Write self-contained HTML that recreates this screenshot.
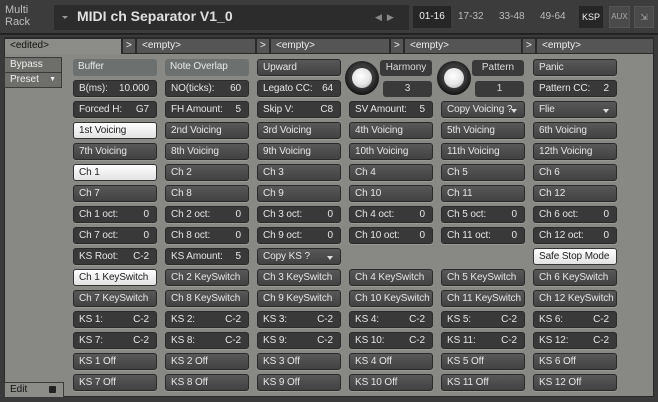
<!DOCTYPE html>
<html><head><meta charset="utf-8"><style>
*{margin:0;padding:0;box-sizing:border-box}
body{width:658px;height:402px;overflow:hidden;background:#3a3a3a;font-family:"Liberation Sans","DejaVu Sans",sans-serif;position:relative}
.a{position:absolute}
.b{position:absolute;width:84px;height:17px;border-radius:3px;font-size:10px;letter-spacing:-0.1px;line-height:16px;padding-left:5px;color:#e6e6e6;white-space:nowrap;overflow:hidden}
.btn{background:linear-gradient(#585858,#424242);border:1px solid #2a2a2a;box-shadow:0 1px 0 #9a9a95}
.val{background:#393939;border:1px solid #2a2a2a;box-shadow:0 1px 0 #9a9a95}
.val span{position:absolute;right:7px}
.lt{background:#6c716f;color:#e8e8e8}
.wh{background:linear-gradient(#ffffff,#e2e2e2);color:#222;border:1px solid #333}
.dd:after{content:"";position:absolute;right:7px;top:7px;border-left:3.5px solid transparent;border-right:3.5px solid transparent;border-top:4px solid #ddd}
.c0{left:73px}.c1{left:165px}.c2{left:257px}.c3{left:349px}.c4{left:441px}.c5{left:533px}
.r0{top:59px}.r1{top:80px}.r2{top:101px}.r3{top:122px}.r4{top:143px}.r5{top:164px}.r6{top:185px}.r7{top:206px}.r8{top:227px}.r9{top:248px}.r10{top:269px}.r11{top:290px}.r12{top:311px}.r13{top:332px}.r14{top:353px}.r15{top:374px}
.tab{position:absolute;top:38px;height:16px;background:#555;border:1px solid #2a2a2a;color:#eee;font-size:10px;line-height:14px;padding-left:5px}
.knob{position:absolute;width:34px;height:34px;border-radius:50%;background:radial-gradient(circle at 50% 45%,#3a3a3a 45%,#151515 72%,#000 100%)}
.knob i{position:absolute;left:7px;top:7px;width:20px;height:20px;border-radius:50%;background:radial-gradient(circle at 45% 40%,#fff,#e5e5e5 55%,#999)}
</style></head><body>
<div class="a" style="left:0;top:0;width:658px;height:36px;background:#3c3c3c"></div>
<div class="a" style="left:5px;top:4px;color:#bdbdbd;font-size:11px;line-height:12px">Multi<br>Rack</div>
<div class="a" style="left:54px;top:5px;width:355px;height:25px;background:#2c2c2c"></div>
<div class="a" style="left:62px;top:16px;border-left:3px solid transparent;border-right:3px solid transparent;border-top:3px solid #999"></div>
<div class="a" style="left:77px;top:8px;color:#e0e0e0;font-size:14px;font-weight:bold">MIDI ch Separator V1_0</div>
<div class="a" style="left:375px;top:12px;color:#888;font-size:9px">◀ &nbsp;▶</div>
<div class="a" style="left:413px;top:6px;width:38px;height:22px;background:#262626;color:#eee;font-size:10px;line-height:22px;text-align:center">01-16</div>
<div class="a" style="left:458px;top:11px;color:#bbb;font-size:10px">17-32</div>
<div class="a" style="left:499px;top:11px;color:#bbb;font-size:10px">33-48</div>
<div class="a" style="left:540px;top:11px;color:#bbb;font-size:10px">49-64</div>
<div class="a" style="left:579px;top:6px;width:24px;height:22px;background:#262626;color:#eee;font-size:9px;line-height:22px;text-align:center">KSP</div>
<div class="a" style="left:609px;top:6px;width:21px;height:22px;background:#4a4a4a;border:1px solid #555;color:#aaa;font-size:8px;line-height:20px;text-align:center">AUX</div>
<div class="a" style="left:634px;top:6px;width:20px;height:22px;background:#4a4a4a;border:1px solid #555;color:#aaa;font-size:9px;line-height:20px;text-align:center">⇲</div>
<div class="a" style="left:0;top:33px;width:658px;height:2px;background:#222"></div>
<div class="a" style="left:4px;top:37px;width:650px;height:360px;background:#888884;border:1px solid #2a2a2a"></div>
<div class="a" style="left:0;top:397px;width:658px;height:5px;background:#3a3a3a"></div>
<div class="tab" style="left:4px;width:118px;background:#8c8c88;color:#111;border-bottom:none">&lt;edited&gt;</div>
<div class="tab" style="left:122px;width:14px;padding-left:3px">&gt;</div>
<div class="tab" style="left:136px;width:120px">&lt;empty&gt;</div>
<div class="tab" style="left:256px;width:14px;padding-left:3px">&gt;</div>
<div class="tab" style="left:270px;width:120px">&lt;empty&gt;</div>
<div class="tab" style="left:390px;width:14px;padding-left:3px">&gt;</div>
<div class="tab" style="left:404px;width:118px">&lt;empty&gt;</div>
<div class="tab" style="left:522px;width:14px;padding-left:3px">&gt;</div>
<div class="tab" style="left:536px;width:118px">&lt;empty&gt;</div>
<div class="a" style="left:4px;top:57px;width:58px;height:16px;background:#6e6e6b;border:1px solid #3a3a3a;color:#eee;font-size:10px;line-height:14px;padding-left:5px">Bypass</div>
<div class="a" style="left:4px;top:72px;width:58px;height:16px;background:#6e6e6b;border:1px solid #3a3a3a;color:#eee;font-size:10px;line-height:14px;padding-left:5px">Preset<span style="position:absolute;right:5px;font-size:7px">▼</span></div>
<div class="a" style="left:4px;top:382px;width:60px;height:15px;background:#8c8c88;border:1px solid #3a3a3a;border-bottom:none;color:#111;font-size:10px;line-height:14px;padding-left:5px">Edit<span style="position:absolute;right:7px;top:3px;width:7px;height:7px;background:#222;border-radius:1px"></span></div>
<div class="b lt c0 r0">Buffer</div>
<div class="b lt c1 r0">Note Overlap</div>
<div class="b btn c2 r0">Upward</div>
<div class="b btn c5 r0">Panic</div>
<div class="knob" style="left:345px;top:61px"><i></i></div>
<div class="a" style="left:380px;top:60px;width:52px;height:16px;background:#3a3a3a;color:#ddd;font-size:10px;line-height:16px;text-align:center;border-radius:3px">Harmony</div>
<div class="a" style="left:383px;top:81px;width:49px;height:16px;background:#3a3a3a;color:#ddd;font-size:10px;line-height:16px;text-align:center;border-radius:3px">3</div>
<div class="knob" style="left:437px;top:61px"><i></i></div>
<div class="a" style="left:472px;top:60px;width:52px;height:16px;background:#3a3a3a;color:#ddd;font-size:10px;line-height:16px;text-align:center;border-radius:3px">Pattern</div>
<div class="a" style="left:475px;top:81px;width:49px;height:16px;background:#3a3a3a;color:#ddd;font-size:10px;line-height:16px;text-align:center;border-radius:3px">1</div>
<div class="b val c0 r1">B(ms):<span>10.000</span></div>
<div class="b val c1 r1">NO(ticks):<span>60</span></div>
<div class="b val c2 r1">Legato CC:<span>64</span></div>
<div class="b val c5 r1">Pattern CC:<span>2</span></div>
<div class="b val c0 r2">Forced H:<span>G7</span></div>
<div class="b val c1 r2">FH Amount:<span>5</span></div>
<div class="b val c2 r2">Skip V:<span>C8</span></div>
<div class="b val c3 r2">SV Amount:<span>5</span></div>
<div class="b btn dd c4 r2">Copy Voicing ?</div>
<div class="b btn dd c5 r2">Flie</div>
<div class="b wh c0 r3">1st Voicing</div><div class="b btn c1 r3">2nd Voicing</div><div class="b btn c2 r3">3rd Voicing</div><div class="b btn c3 r3">4th Voicing</div><div class="b btn c4 r3">5th Voicing</div><div class="b btn c5 r3">6th Voicing</div>
<div class="b btn c0 r4">7th Voicing</div><div class="b btn c1 r4">8th Voicing</div><div class="b btn c2 r4">9th Voicing</div><div class="b btn c3 r4">10th Voicing</div><div class="b btn c4 r4">11th Voicing</div><div class="b btn c5 r4">12th Voicing</div>
<div class="b wh c0 r5">Ch 1</div><div class="b btn c1 r5">Ch 2</div><div class="b btn c2 r5">Ch 3</div><div class="b btn c3 r5">Ch 4</div><div class="b btn c4 r5">Ch 5</div><div class="b btn c5 r5">Ch 6</div>
<div class="b btn c0 r6">Ch 7</div><div class="b btn c1 r6">Ch 8</div><div class="b btn c2 r6">Ch 9</div><div class="b btn c3 r6">Ch 10</div><div class="b btn c4 r6">Ch 11</div><div class="b btn c5 r6">Ch 12</div>
<div class="b val c0 r7">Ch 1 oct:<span>0</span></div><div class="b val c1 r7">Ch 2 oct:<span>0</span></div><div class="b val c2 r7">Ch 3 oct:<span>0</span></div><div class="b val c3 r7">Ch 4 oct:<span>0</span></div><div class="b val c4 r7">Ch 5 oct:<span>0</span></div><div class="b val c5 r7">Ch 6 oct:<span>0</span></div>
<div class="b val c0 r8">Ch 7 oct:<span>0</span></div><div class="b val c1 r8">Ch 8 oct:<span>0</span></div><div class="b val c2 r8">Ch 9 oct:<span>0</span></div><div class="b val c3 r8">Ch 10 oct:<span>0</span></div><div class="b val c4 r8">Ch 11 oct:<span>0</span></div><div class="b val c5 r8">Ch 12 oct:<span>0</span></div>
<div class="b val c0 r9">KS Root:<span>C-2</span></div>
<div class="b val c1 r9">KS Amount:<span>5</span></div>
<div class="b btn dd c2 r9">Copy KS ?</div>
<div class="b wh c5 r9">Safe Stop Mode</div>
<div class="b wh c0 r10">Ch 1 KeySwitch</div><div class="b btn c1 r10">Ch 2 KeySwitch</div><div class="b btn c2 r10">Ch 3 KeySwitch</div><div class="b btn c3 r10">Ch 4 KeySwitch</div><div class="b btn c4 r10">Ch 5 KeySwitch</div><div class="b btn c5 r10">Ch 6 KeySwitch</div>
<div class="b btn c0 r11">Ch 7 KeySwitch</div><div class="b btn c1 r11">Ch 8 KeySwitch</div><div class="b btn c2 r11">Ch 9 KeySwitch</div><div class="b btn c3 r11">Ch 10 KeySwitch</div><div class="b btn c4 r11">Ch 11 KeySwitch</div><div class="b btn c5 r11">Ch 12 KeySwitch</div>
<div class="b val c0 r12">KS 1:<span>C-2</span></div><div class="b val c1 r12">KS 2:<span>C-2</span></div><div class="b val c2 r12">KS 3:<span>C-2</span></div><div class="b val c3 r12">KS 4:<span>C-2</span></div><div class="b val c4 r12">KS 5:<span>C-2</span></div><div class="b val c5 r12">KS 6:<span>C-2</span></div>
<div class="b val c0 r13">KS 7:<span>C-2</span></div><div class="b val c1 r13">KS 8:<span>C-2</span></div><div class="b val c2 r13">KS 9:<span>C-2</span></div><div class="b val c3 r13">KS 10:<span>C-2</span></div><div class="b val c4 r13">KS 11:<span>C-2</span></div><div class="b val c5 r13">KS 12:<span>C-2</span></div>
<div class="b btn c0 r14">KS 1 Off</div><div class="b btn c1 r14">KS 2 Off</div><div class="b btn c2 r14">KS 3 Off</div><div class="b btn c3 r14">KS 4 Off</div><div class="b btn c4 r14">KS 5 Off</div><div class="b btn c5 r14">KS 6 Off</div>
<div class="b btn c0 r15">KS 7 Off</div><div class="b btn c1 r15">KS 8 Off</div><div class="b btn c2 r15">KS 9 Off</div><div class="b btn c3 r15">KS 10 Off</div><div class="b btn c4 r15">KS 11 Off</div><div class="b btn c5 r15">KS 12 Off</div>
</body></html>
